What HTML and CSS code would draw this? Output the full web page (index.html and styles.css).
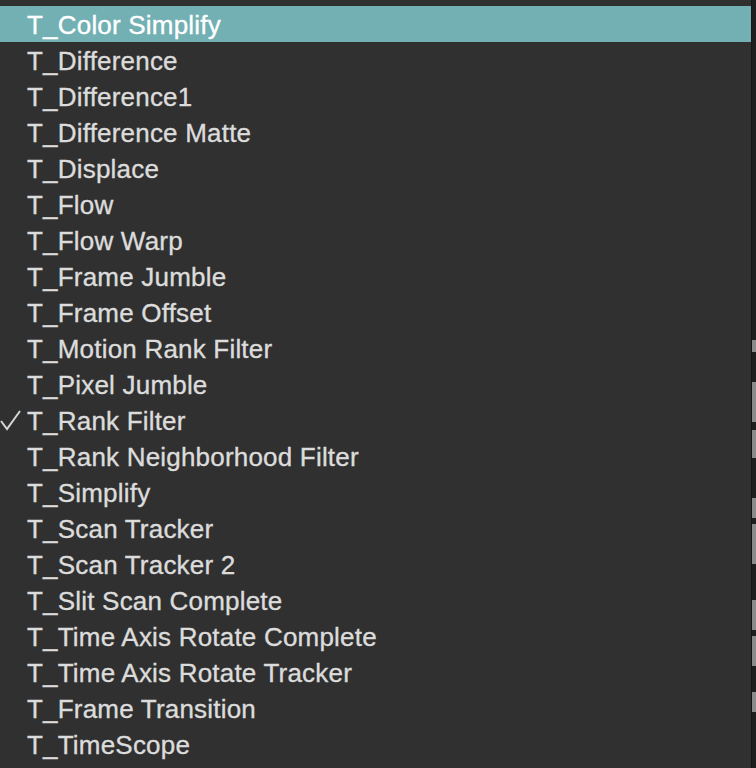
FILE: index.html
```html
<!DOCTYPE html>
<html lang="en">
<head>
    <meta charset="UTF-8">
    <meta name="viewport" content="width=device-width, initial-scale=1.0">
    <title>Effect Menu</title>
    <link rel="stylesheet" href="styles.css">
</head>
<body>

<div class="screen">
    <!-- popup menu -->
    <ul class="menu">
        <li class="item selected">T_Color Simplify</li>
        <li class="item">T_Difference</li>
        <li class="item">T_Difference1</li>
        <li class="item">T_Difference Matte</li>
        <li class="item">T_Displace</li>
        <li class="item">T_Flow</li>
        <li class="item">T_Flow Warp</li>
        <li class="item">T_Frame Jumble</li>
        <li class="item">T_Frame Offset</li>
        <li class="item">T_Motion Rank Filter</li>
        <li class="item">T_Pixel Jumble</li>
        <li class="item checked">
            <svg class="check" width="22" height="22" viewBox="0 0 22 22">
                <polyline points="1,12 7,20 20,2" fill="none" stroke="#d6d6d6" stroke-width="2"/>
            </svg>
            T_Rank Filter
        </li>
        <li class="item">T_Rank Neighborhood Filter</li>
        <li class="item">T_Simplify</li>
        <li class="item">T_Scan Tracker</li>
        <li class="item">T_Scan Tracker 2</li>
        <li class="item">T_Slit Scan Complete</li>
        <li class="item">T_Time Axis Rotate Complete</li>
        <li class="item">T_Time Axis Rotate Tracker</li>
        <li class="item">T_Frame Transition</li>
        <li class="item">T_TimeScope</li>
    </ul>

    <!-- window behind the menu -->
    <div class="behind">
        <span class="seg dark" style="height: 340px"></span>
        <span class="seg light" style="height: 12px"></span>
        <span class="seg dark" style="height: 30px"></span>
        <span class="seg light" style="height: 40px"></span>
        <span class="seg dark" style="height: 8px"></span>
        <span class="seg light" style="height: 28px"></span>
        <span class="seg dark" style="height: 40px"></span>
        <span class="seg light" style="height: 20px"></span>
        <span class="seg dark" style="height: 6px"></span>
        <span class="seg light" style="height: 40px"></span>
        <span class="seg dark" style="height: 36px"></span>
        <span class="seg light" style="height: 30px"></span>
        <span class="seg dark" style="height: 6px"></span>
        <span class="seg light" style="height: 30px"></span>
        <span class="seg dark" style="height: 26px"></span>
        <span class="seg light" style="height: 20px"></span>
        <span class="seg dark" style="height: 56px"></span>
    </div>
</div>

</body>
</html>
```

FILE: styles.css
```css
body {
    margin: 0;
    padding: 0;
    background-color: #1c1c1c;
    font-family: 'Liberation Sans', Arial, sans-serif;
}

.screen {
    display: flex;
    width: 756px;
    height: 768px;
    overflow: hidden;
}

.menu {
    list-style: none;
    margin: 0;
    padding: 6px 0;
    width: 752px;
    background-color: #303030;
}

.item {
    position: relative;
    height: 36px;
    line-height: 38px;
    padding-left: 27px;
    font-size: 26px;
    letter-spacing: 0.2px;
    color: #dcdcdc;
    -webkit-text-stroke: 0.35px #dcdcdc;
    white-space: nowrap;
}

.item.selected {
    background-color: #72b0b3;
    color: #ffffff;
    -webkit-text-stroke: 0.35px #ffffff;
}

.check {
    position: absolute;
    left: 0;
    top: 7px;
}

.behind {
    display: flex;
    flex-direction: column;
    width: 4px;
    border-left: 1px solid #151515;
}

.seg {
    display: block;
    flex-shrink: 0;
}

.seg.dark {
    background-color: #1e1e1e;
}

.seg.light {
    background-color: #8a8a8a;
}
```
